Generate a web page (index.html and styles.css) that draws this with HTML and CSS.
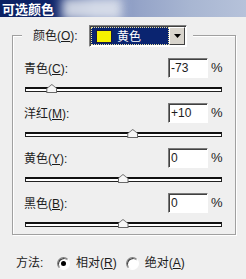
FILE: index.html
```html
<!DOCTYPE html>
<html lang="zh-CN">
<head>
    <meta charset="UTF-8">
    <title>可选颜色</title>
    <link rel="stylesheet" href="styles.css">
</head>
<body>
    <div class="titlebar">
        <span class="title">可选颜色</span>
        <div class="blur"></div>
    </div>

    <div class="dialog">
        <div class="group">
            <div class="group-head">
                <span class="head-label">颜色(<u>O</u>):</span>
                <div class="select">
                    <div class="select-field">
                        <span class="swatch"></span>
                        <span class="select-text">黄色</span>
                    </div>
                    <div class="select-btn">
                        <svg width="7" height="4" viewBox="0 0 7 4"><polygon points="0,0 7,0 3.5,4" fill="#000"/></svg>
                    </div>
                </div>
            </div>

            <div class="rows">
                <div class="row">
                    <div class="row-line">
                        <span class="row-label">青色(<u>C</u>):</span>
                        <span class="num">-73</span>
                        <span class="pct">%</span>
                    </div>
                    <div class="track"><span class="thumb" style="left:13.5%"></span></div>
                </div>
                <div class="row">
                    <div class="row-line">
                        <span class="row-label">洋红(<u>M</u>):</span>
                        <span class="num">+10</span>
                        <span class="pct">%</span>
                    </div>
                    <div class="track"><span class="thumb" style="left:55%"></span></div>
                </div>
                <div class="row">
                    <div class="row-line">
                        <span class="row-label">黄色(<u>Y</u>):</span>
                        <span class="num">0</span>
                        <span class="pct">%</span>
                    </div>
                    <div class="track"><span class="thumb" style="left:50%"></span></div>
                </div>
                <div class="row">
                    <div class="row-line">
                        <span class="row-label">黑色(<u>B</u>):</span>
                        <span class="num">0</span>
                        <span class="pct">%</span>
                    </div>
                    <div class="track"><span class="thumb" style="left:50%"></span></div>
                </div>
            </div>
        </div>

        <div class="method">
            <span class="method-label">方法:</span>
            <span class="radio checked"></span>
            <span class="radio-text">相对(<u>R</u>)</span>
            <span class="radio"></span>
            <span class="radio-text">绝对(<u>A</u>)</span>
        </div>
    </div>
</body>
</html>
```

FILE: styles.css
```css
body {
    margin: 0;
    padding: 0;
    width: 246px;
    height: 279px;
    overflow: hidden;
    background-color: #efefef;
    font-family: "Liberation Sans", "Noto Sans CJK SC", sans-serif;
    font-size: 12px;
    line-height: 16px;
    color: #1c1c1c;
}
u {
    text-decoration: underline;
    text-underline-offset: 1px;
}
.titlebar {
    position: relative;
    height: 17px;
    background: linear-gradient(to right, #0b2163 0, #0e2468 50px, #2c4282 66px, #7a8cba 95px, #95a4c8 140px, #a8b6d2 190px, #b6c2da 246px);
    overflow: hidden;
}
.title {
    position: relative;
    z-index: 1;
    display: block;
    padding-left: 2px;
    color: #fff;
    font-family: "Noto Sans CJK SC", sans-serif;
    font-weight: bold;
    font-size: 13px;
    line-height: 17px;
}
.blur {
    position: absolute;
    left: 62px;
    top: -2px;
    width: 60px;
    height: 22px;
    background: #e4e8f0;
    filter: blur(5px);
    opacity: 0.85;
}
.dialog {
    padding: 18px 10px 0 12px;
}
.group {
    border: 1px solid #a0a0a0;
    box-shadow: inset 1px 1px 0 #fff, 1px 1px 0 #fff;
    padding-bottom: 7px;
}
.group-head {
    display: flex;
    align-items: center;
    width: max-content;
    height: 22px;
    margin: -11px 0 0 9px;
    padding: 0 6px 0 11px;
    background-color: #efefef;
}
.head-label {
    width: 44px;
    margin-right: 12px;
    white-space: nowrap;
}
.select {
    display: flex;
    width: 94px;
    height: 18px;
    border: 1px solid;
    border-color: #808080 #fff #fff #808080;
    box-shadow: inset 1px 1px 0 #404040;
    padding: 1px;
    background-color: #fff;
}
.select-field {
    flex: 1;
    display: flex;
    align-items: center;
    background-color: #0a2470;
    outline: 1px dotted #e8e0a0;
    outline-offset: -1px;
    padding-left: 5px;
}
.swatch {
    width: 14px;
    height: 11px;
    background-color: #f6f200;
    border: 1px solid #1a1a40;
    margin-right: 5px;
}
.select-text {
    color: #fff;
    font-family: "Noto Sans CJK SC", sans-serif;
}
.select-btn {
    display: flex;
    align-items: center;
    justify-content: center;
    width: 16px;
    box-sizing: border-box;
    background-color: #d8d4cc;
    border: 1px solid;
    border-color: #fff #404040 #404040 #fff;
}
.rows {
    margin-top: 10px;
    padding: 0 13px 0 11px;
    display: flex;
    flex-direction: column;
    gap: 10px;
}
.row-line {
    display: flex;
    align-items: center;
    height: 21px;
}
.row-label {
    flex: 1;
    padding-top: 3px;
}
.num {
    width: 36px;
    height: 18px;
    line-height: 18px;
    padding-left: 2px;
    background-color: #fff;
    border: 1px solid;
    border-color: #7a7a7a #fff #fff #7a7a7a;
    box-shadow: inset 1px 1px 0 #404040;
    font-size: 12px;
}
.pct {
    margin-left: 3px;
    width: 11px;
    font-size: 13px;
}
.track {
    position: relative;
    margin: 9px 0 0 1px;
    height: 2px;
    background-color: #fff;
    border: 1px solid #222;
    border-top-width: 2px;
    border-top-color: #111;
}
.thumb {
    position: absolute;
    bottom: -2px;
    width: 11px;
    height: 9px;
    margin-left: -6px;
    background: #6a6a6a;
    clip-path: polygon(50% 0, 100% 50%, 100% 100%, 0 100%, 0 50%);
}
.thumb::after {
    content: "";
    position: absolute;
    left: 1px;
    top: 1px;
    right: 1px;
    bottom: 1px;
    background: #f6f6f6;
    clip-path: polygon(50% 0, 100% 50%, 100% 100%, 0 100%, 0 50%);
}
.method {
    display: flex;
    align-items: center;
    margin-top: 20px;
    padding-left: 4px;
    height: 16px;
}
.method-label {
    width: 41px;
}
.radio {
    position: relative;
    width: 11px;
    height: 11px;
    border-radius: 50%;
    border: 1px solid;
    border-color: #808080 #fff #fff #808080;
    box-shadow: inset 1px 1px 0 #404040;
    background-color: #fff;
    margin-right: 6px;
}
.radio.checked::after {
    content: "";
    position: absolute;
    left: 3px;
    top: 3px;
    width: 5px;
    height: 5px;
    border-radius: 50%;
    background-color: #000;
}
.radio-text {
    margin-right: 9px;
}
```
